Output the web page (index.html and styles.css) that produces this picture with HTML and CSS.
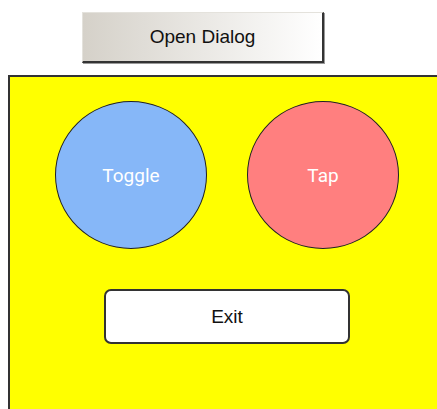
FILE: index.html
```html
<!doctype html>
<html lang="en">
  <head>
    <meta charset="UTF-8" />
    <meta name="viewport" content="width=device-width, initial-scale=1.0" />
    <title>Dialog Demo</title>
    <link rel="stylesheet" href="styles.css">
  </head>
  <body>
    <div class="toolbar">
      <button class="open_btn" type="button">Open Dialog</button>
    </div>
    <div class="panel">
      <div class="circles">
        <div class="circle toggle">Toggle</div>
        <div class="circle tap">Tap</div>
      </div>
      <button class="exit_btn" type="button">Exit</button>
    </div>
  </body>
</html>
```

FILE: styles.css
```css
html,
body {
  height: 100%;
  overflow: hidden;
}
body {
  margin: 0;
  padding: 0 0 0 8px;
  font-family: "Liberation Sans", Arial, sans-serif;
  background: #fff;
  box-sizing: border-box;
}
.toolbar {
  padding: 12px 0 0 74px;
  height: 63px;
  box-sizing: border-box;
}
.open_btn {
  width: 242px;
  height: 51px;
  font-family: "Liberation Sans", Arial, sans-serif;
  font-size: 19px;
  color: #111;
  background: linear-gradient(to right, #d5d1c9, #ffffff);
  border-style: solid;
  border-width: 1px 2px 2px 1px;
  border-color: #e4e2dc #333 #333 #e4e2dc;
  box-shadow: 1px 1px 0 #999;
  padding: 0;
}
.panel {
  width: 436px;
  height: 334px;
  margin-top: 12px;
  background: #ffff00;
  border-style: solid;
  border-color: #333;
  border-width: 2px 0 0 2px;
  box-sizing: border-box;
  display: flex;
  flex-direction: column;
  align-items: center;
  padding-top: 24px;
}
.circles {
  display: flex;
  gap: 40px;
}
.circle {
  width: 152px;
  height: 148px;
  border-radius: 50%;
  border: 1.5px solid #222;
  box-sizing: border-box;
  display: flex;
  align-items: center;
  justify-content: center;
  font-family: Roboto, sans-serif;
  font-size: 19px;
  color: #fff;
}
.toggle {
  background: #86b7f8;
}
.tap {
  background: #ff7f7f;
}
.exit_btn {
  margin-top: 40px;
  width: 246px;
  height: 55px;
  background: #fff;
  border: 2px solid #333;
  border-radius: 7px;
  font-family: "Liberation Sans", Arial, sans-serif;
  font-size: 19px;
  color: #111;
}
```
